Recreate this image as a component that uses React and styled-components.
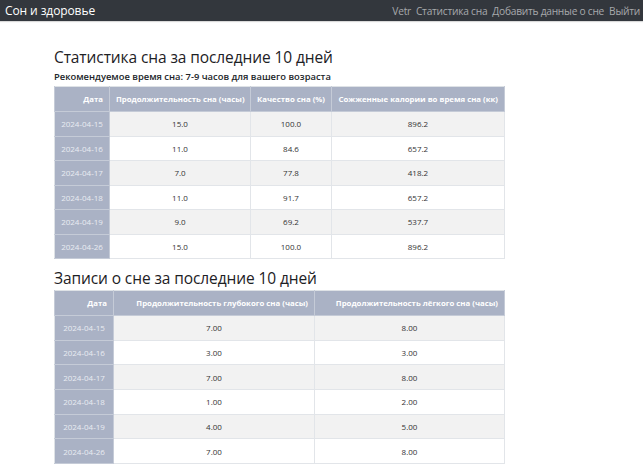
import React from "react";
import styled, { createGlobalStyle } from "styled-components";

const Global = createGlobalStyle`
  html, body { margin: 0; padding: 0; background: #fff; }
  body { font-family: "Open Sans", "Noto Sans", sans-serif; color: #212529; }
  *, *::before, *::after { box-sizing: border-box; }
`;

const Nav = styled.nav`
  height: 21px;
  background: #33373d;
  display: flex;
  align-items: center;
  justify-content: space-between;
  padding: 0 3px 0 5px;
  box-shadow: 0 1px 1px rgba(0,0,0,0.15);
`;

const Brand = styled.span`
  color: #fff;
  font-size: 12px;
  letter-spacing: -0.1px;
`;

const Links = styled.div`
  display: flex;
  gap: 5px;
`;

const NavLink = styled.a`
  color: #a7a9ac;
  font-size: 10.2px;
  letter-spacing: -0.25px;
  text-decoration: none;
`;

const Main = styled.main`
  padding: 0 0 0 54px;
`;

const Heading = styled.h2`
  margin: ${(p) => p.$top}px 0 0;
  font-size: 15.5px;
  font-weight: 500;
  line-height: 20px;
  letter-spacing: -0.1px;
  color: #1d2125;
`;

const Sub = styled.p`
  margin: 3px 0 0;
  font-size: 9.4px;
  font-weight: 600;
  line-height: 14px;
`;

const Table = styled.table`
  margin-top: ${(p) => p.$top}px;
  width: 450px;
  border-collapse: collapse;
  table-layout: fixed;
  border: 1px solid #dee2e6;
`;

const Th = styled.th`
  width: ${(p) => p.$w}px;
  height: 25px;
  padding: 0 6px;
  background: #aab2c5;
  color: #fff;
  font-size: 7.8px;
  font-weight: 700;
  text-align: right;
  border: 1px solid #c5cbd7;
  border-top: 0;
  white-space: nowrap;
`;

const Row = styled.tr`
  height: ${(p) => p.$h}px;
  background: ${(p) => (p.$odd ? "#f2f2f2" : "#fff")};
`;

const DateCell = styled.th`
  background: #aab2c5;
  color: #e9ecf2;
  font-size: 8px;
  font-weight: 400;
  text-align: center;
  padding: 0;
  border: 1px solid #c5cbd7;
  border-left: 0;
`;

const Td = styled.td`
  font-size: 8px;
  color: #333;
  text-align: center;
  padding: 0;
  border: 1px solid #e2e5e9;
`;

const stats = [
  ["2024-04-15", "15.0", "100.0", "896.2"],
  ["2024-04-16", "11.0", "84.6", "657.2"],
  ["2024-04-17", "7.0", "77.8", "418.2"],
  ["2024-04-18", "11.0", "91.7", "657.2"],
  ["2024-04-19", "9.0", "69.2", "537.7"],
  ["2024-04-26", "15.0", "100.0", "896.2"],
];

const records = [
  ["2024-04-15", "7.00", "8.00"],
  ["2024-04-16", "3.00", "3.00"],
  ["2024-04-17", "7.00", "8.00"],
  ["2024-04-18", "1.00", "2.00"],
  ["2024-04-19", "4.00", "5.00"],
  ["2024-04-26", "7.00", "8.00"],
];

function DataTable({ top, cols, rows, rowH }) {
  return (
    <Table $top={top}>
      <thead>
        <tr>
          {cols.map(([label, w]) => (
            <Th key={label} $w={w}>{label}</Th>
          ))}
        </tr>
      </thead>
      <tbody>
        {rows.map((r, i) => (
          <Row key={r[0]} $odd={i % 2 === 0} $h={rowH}>
            <DateCell>{r[0]}</DateCell>
            {r.slice(1).map((v, j) => (
              <Td key={j}>{v}</Td>
            ))}
          </Row>
        ))}
      </tbody>
    </Table>
  );
}

export default function App() {
  return (
    <>
      <Global />
      <Nav>
        <Brand>Сон и здоровье</Brand>
        <Links>
          <NavLink>Vetr</NavLink>
          <NavLink>Статистика сна</NavLink>
          <NavLink>Добавить данные о сне</NavLink>
          <NavLink>Выйти</NavLink>
        </Links>
      </Nav>
      <Main>
        <Heading $top={26}>Статистика сна за последние 10 дней</Heading>
        <Sub>Рекомендуемое время сна: 7-9 часов для вашего возраста</Sub>
        <DataTable
          top={2}
          rowH={24.5}
          cols={[
            ["Дата", 55],
            ["Продолжительность сна (часы)", 141],
            ["Качество сна (%)", 81],
            ["Сожженные калории во время сна (кк)", 173],
          ]}
          rows={stats}
        />
        <Heading $top={9}>Записи о сне за последние 10 дней</Heading>
        <DataTable
          top={2}
          rowH={24.7}
          cols={[
            ["Дата", 59],
            ["Продолжительность глубокого сна (часы)", 201],
            ["Продолжительность лёгкого сна (часы)", 190],
          ]}
          rows={records}
        />
      </Main>
    </>
  );
}
